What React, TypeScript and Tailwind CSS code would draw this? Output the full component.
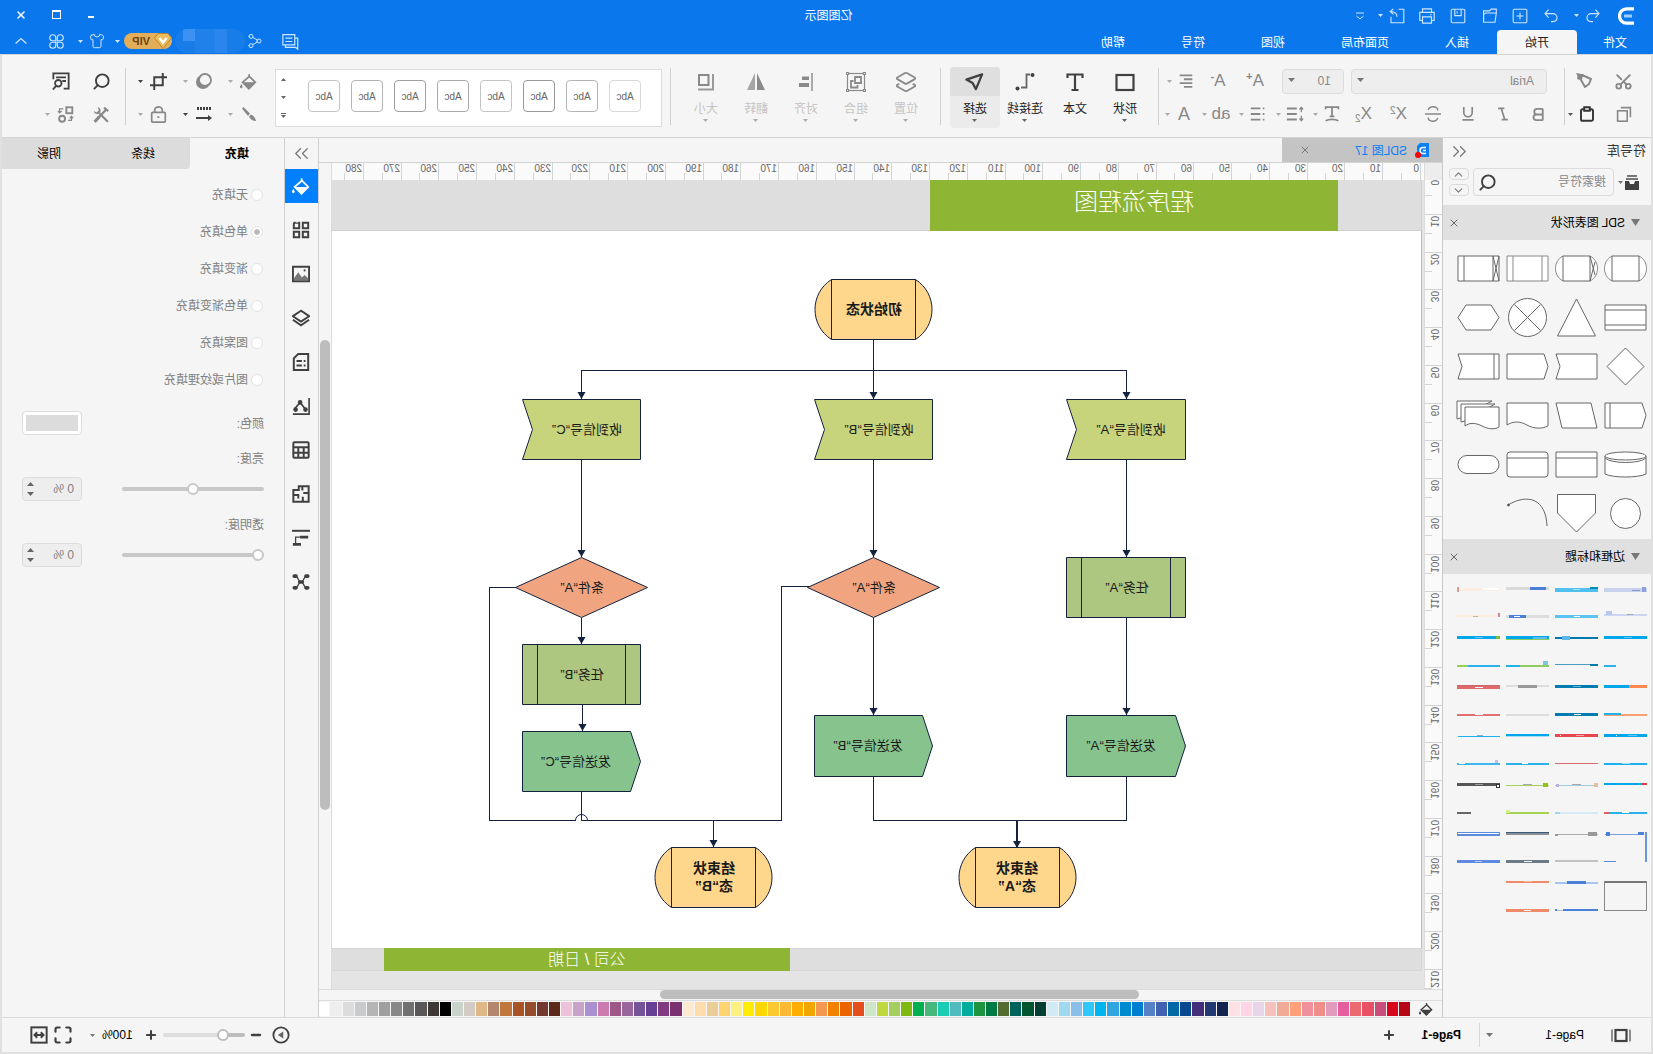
import React from 'react';
import {
  Bold,
  ChevronDown,
  ChevronUp,
  ChevronsLeft,
  ChevronsRight,
  Layers2,
  Maximize,
  Minus,
  Plus,
  Scissors,
  Search,
  Share2,
  Shirt,
  X,
} from 'lucide-react';

type Kids = { children?: React.ReactNode };

function Ic({ size = 20, sw = 2, children }: Kids & { size?: number; sw?: number }) {
  return (
    <svg width={size} height={size} viewBox="0 0 20 20" fill="none" stroke="currentColor" strokeWidth={sw} aria-hidden="true">
      {children}
    </svg>
  );
}

function Caret({ up = false, big = false }: { up?: boolean; big?: boolean }) {
  return (
    <svg width={big ? 7 : 5} height={big ? 4 : 3} viewBox="0 0 7 4" fill="currentColor" className="shrink-0" aria-hidden="true">
      <path d={up ? 'M0 4h7L3.5 0z' : 'M0 0h7L3.5 4z'} />
    </svg>
  );
}

function Btn({ label, className = '', children }: Kids & { label: string; className?: string }) {
  return (
    <button type="button" aria-label={label} className={`flex shrink-0 items-center justify-center ${className}`}>
      {children}
    </button>
  );
}

/* ---------- icons ---------- */

const Undo = () => (
  <Ic size={16} sw={1.4}>
    <path d="M7 2 2.500 7 7 12M3 7h9.500a5 5 0 0 1 5 5c0 3-2 5-5 5H10" />
  </Ic>
);
const Redo = () => (
  <Ic size={16} sw={1.4}>
    <path d="M13 2l4.500 5L13 12M17 7H7.500a5 5 0 0 0-5 5c0 3 2 5 5 5H10" />
  </Ic>
);
const Logo = () => (
  <svg width="17" height="18" viewBox="0 0 17 18" fill="none" stroke="#fff" aria-hidden="true">
    <path d="M1 1.800h7.500a7 7.200 0 0 1 0 14.400H1" strokeWidth="3.200" />
    <path d="M3 9h8" stroke="#9fd0ff" strokeWidth="3" />
  </svg>
);
const Printer = () => (
  <Ic size={18} sw={1.3}>
    <path d="M5 6V2h10v4M5 15H2V6h16v9h-3M5 11h10v7H5zM5 8.500h1.500" />
  </Ic>
);
const Folder = () => (
  <Ic size={17} sw={1.3}>
    <path d="M2 7V2.500h6l2 2h7V7M2 7h12.500l2.500 2v9H3.500z" />
    <path d="M17 4.500V16" />
  </Ic>
);
const Save = () => (
  <Ic size={16} sw={1.4}>
    <rect x="1.500" y="1.500" width="17" height="17" rx="1.500" />
    <path d="M6 1.500v8h8v-8M11 4v3" />
  </Ic>
);
const NewDoc = () => (
  <Ic size={16} sw={1.4}>
    <rect x="1.500" y="1.500" width="17" height="17" rx="1.500" />
    <path d="M10 5.500v9M5.500 10h9" />
  </Ic>
);
const Export = () => (
  <Ic size={16} sw={1.4}>
    <path d="M8 1.500H1.500v17h16V11M10 11c0-4 3-6.500 8-6.500M14.500 1l4 3.500-4 3.500" />
  </Ic>
);
const Chat = () => (
  <Ic size={17} sw={1.4}>
    <path d="M5 2h14v12H5zM5 6H1.500v13L4 17h12v-3M8 6h8M8 10h8" />
  </Ic>
);
const Clover = () => (
  <Ic size={15} sw={1.5}>
    <path d="M9 9H5a4 4 0 1 1 4-4zM11 9h4a4 4 0 1 0-4-4zM9 11H5a4 4 0 1 0 4 4zM11 11h4a4 4 0 1 1-4 4z" />
  </Ic>
);
const Painter = () => (
  <svg width="18" height="18" viewBox="0 0 18 18" aria-hidden="true">
    <path d="M2 7 11 3l1 5-4 7-4-3z" fill="none" stroke="currentColor" strokeWidth="2" strokeLinejoin="round" />
    <path d="M9 2.500 13 8l3-1-.5-3L17 1l-3 .5z" fill="currentColor" />
  </svg>
);
const CopyIc = () => (
  <Ic size={16}>
    <path d="M2 14V2h12" />
    <rect x="6" y="6" width="12" height="13" />
  </Ic>
);
const Paste = () => (
  <Ic size={16} sw={2.400}>
    <rect x="2.500" y="4" width="15" height="14.500" rx="2" />
    <path d="M6.500 1.500h7V6h-7z" fill="#f5f5f5" />
  </Ic>
);
const AlignIc = () => (
  <Ic size={14} sw={2.600}>
    <path d="M1 2h18M1 7.500h12M1 13h18M1 18.500h12" />
  </Ic>
);
const Spacing = () => (
  <Ic size={18} sw={2.2}>
    <path d="M8 4h11M8 10h11M8 16h11" />
    <path d="M3 3v5M3 12v5M1 5l2-2.500L5 5M1 15l2 2.500L5 15" strokeWidth="1.400" />
  </Ic>
);
const Bullets = () => (
  <Ic size={16} sw={2.4}>
    <path d="M7 3h12M7 10h12M7 17h12M2 3h2M2 10h2M2 17h2" />
  </Ic>
);
const Connector = () => (
  <svg width="20" height="20" viewBox="0 0 20 20" fill="none" strokeWidth="1.800" aria-hidden="true">
    <path d="M5 2.500h3.500v13H14" stroke="#666" />
    <circle cx="2.500" cy="3" r="2" fill="#404040" />
    <circle cx="17.500" cy="16.500" r="2" fill="#404040" />
  </svg>
);
const Pointer = () => (
  <Ic size={19} sw={2.400}>
    <path d="M2 2.500 18.500 8l-6.500 3.500L8.500 18z" strokeLinejoin="round" />
  </Ic>
);
const GroupIc = () => (
  <Ic size={20} sw={1.2}>
    <rect x="1.500" y="1.500" width="17" height="17" />
    <path d="M.5.5h2v2h-2zM17.500.5h2v2h-2zM.5 17.500h2v2h-2zM17.500 17.500h2v2h-2z" fill="#f5f5f5" />
    <path d="M5 5h6v6H5zM12.500 9H15v6.500H8.500V13" strokeWidth="1.800" />
  </Ic>
);
const AlignObj = () => (
  <svg width="16" height="18" viewBox="0 0 16 18" fill="currentColor" aria-hidden="true">
    <path d="M1 0h2v18H1z" opacity=".7" />
    <path d="M5 3.500h7v3.500H5zM5 10h10v4H5z" />
  </svg>
);
const FlipIc = () => (
  <svg width="20" height="18" viewBox="0 0 20 18" fill="currentColor" aria-hidden="true">
    <path d="M9 0v17H1z" />
    <path d="M11 0v17h8z" opacity=".75" />
  </svg>
);
const SizeIc = () => (
  <svg width="18" height="18" viewBox="0 0 18 18" fill="none" stroke="currentColor" strokeWidth="2" aria-hidden="true">
    <path d="M6.500 2H16v10H6.500z" />
    <path d="M2 1v15.500h15" opacity=".85" />
  </svg>
);
const ShadowIc = () => (
  <svg width="18" height="18" viewBox="0 0 18 18" aria-hidden="true">
    <circle cx="10" cy="10" r="7" fill="currentColor" />
    <circle cx="8" cy="8" r="6" fill="#f5f5f5" stroke="currentColor" strokeWidth="1.800" />
  </svg>
);
const CropIc = () => (
  <Ic size={17} sw={2.300}>
    <path d="M5 0v14.500h15M0 5h15v15" />
  </Ic>
);
const PenIc = () => (
  <svg width="16" height="16" viewBox="0 0 16 16" fill="currentColor" aria-hidden="true">
    <path d="M15.500 1.500 14 .5 6.500 7l2.500 2.500zM5.500 8 8 10.500C6.500 13.500 4 15.500 1 15.500c2-2 2-6 4.500-7.500z" />
  </svg>
);
const LinesIc = () => (
  <svg width="16" height="16" viewBox="0 0 16 16" fill="currentColor" aria-hidden="true">
    <path d="M1 1h2v3H1zM4 1h2v3H4zM7 1h2v3H7zM10 1h2v3h-2zM13 1h2v3h-2zM16 11H4V9l-4 3 4 3v-2h12z" />
  </svg>
);
const LockIc = () => (
  <Ic size={17} sw={2}>
    <rect x="2" y="7.500" width="16" height="11.500" rx="1" />
    <path d="M5.500 7.500V5a4 3.500 0 0 1 9 0v2.500M9 13h2.500" />
  </Ic>
);
const FindDoc = () => (
  <Ic size={18} sw={2}>
    <path d="M7 18.500H1.500v-17h17V8M4.500 6h11M4.500 10h4" />
    <circle cx="13" cy="12.500" r="3.600" />
    <path d="m15.500 15.500 3.500 4" />
  </Ic>
);
const ToolsIc = () => (
  <Ic size={17} sw={2.600}>
    <path d="M2 6l5-4M4.500 4 18 18.500M12.500 8.500 2.500 18.500" />
    <path d="M14.500 1.500a4 4 0 1 0 4.500 4.500L16 7.500 13 5z" fill="currentColor" stroke="none" />
    <path d="M12.500 12.500 18 18.500" strokeWidth="3.600" />
  </Ic>
);
const ReplaceIc = () => (
  <Ic size={17} sw={2.200}>
    <rect x="2" y="1.500" width="7" height="7" />
    <circle cx="14" cy="15" r="3.500" />
    <path d="M12.500 3.500h4.500v4M14.500 6l2.500 2 2-2M7 17H3v-4M1 14.500 3 12l2 2.500" strokeWidth="1.500" />
  </Ic>
);
const BucketIc = ({ size = 18 }: { size?: number }) => (
  <svg width={size} height={size} viewBox="0 0 20 20" aria-hidden="true">
    <path d="M9.500 1.500 9 4l8 7-7.500 7.500L2 11l7-7" fill="none" stroke="currentColor" strokeWidth="2" />
    <path d="M2 11h15l-7.500 7.500zM18.500 13c1.200 2 1.500 2.800 1.500 3.500a1.500 1.500 0 0 1-3 0c0-.7.3-1.500 1.500-3.500z" fill="currentColor" />
  </svg>
);

/* ---------- title bar ---------- */

function TitleBar() {
  const tabs = ['插入', '页面布局', '视图', '符号', '帮助'];
  return (
    <header className="shrink-0 bg-[#0a78ec] text-white">
      <div className="flex h-[29px] items-center pt-0.5">
        <div className="flex flex-1 items-center text-[#cfe5fc]">
          <div className="ml-[18px] w-[17px]"><Logo /></div>
          <Btn label="撤销" className="ml-[13px] w-6"><Undo /></Btn>
          <Btn label="撤销列表" className="w-2"><Caret /></Btn>
          <Btn label="恢复" className="ml-[6px] w-[31px]"><Redo /></Btn>
          <Btn label="新建" className="w-[31px]"><NewDoc /></Btn>
          <Btn label="打开" className="w-[31px]"><Folder /></Btn>
          <Btn label="保存" className="w-[31px]"><Save /></Btn>
          <Btn label="打印" className="w-[31px]"><Printer /></Btn>
          <Btn label="导出" className="ml-[3px] w-6"><Export /></Btn>
          <Btn label="导出列表" className="w-2"><Caret /></Btn>
          <Btn label="更多" className="ml-[9px] w-4">
            <Ic size={10} sw={2}><path d="M2 4h16M3 10l7 6 7-6" /></Ic>
          </Btn>
        </div>
        <h1 className="text-xs">亿图图示</h1>
        <div className="flex flex-1 justify-end pr-1 pb-0.5">
          <Btn label="最小化" className="w-[35px]"><span className="mt-1 h-0.5 w-1.5 bg-white" /></Btn>
          <Btn label="最大化" className="w-[35px]"><span className="size-[9px] border border-t-2 border-white" /></Btn>
          <Btn label="关闭" className="w-[35px]"><X size={12} strokeWidth={3} /></Btn>
        </div>
      </div>
      <div className="flex h-[25px] items-end text-xs">
        <nav className="flex flex-1 items-end">
          <button type="button" className="h-6 w-[76px] pt-0.5">文件</button>
          <button type="button" className="h-6 w-20 rounded-t-sm bg-[#f5f5f5] pt-0.5 text-[#222]">开始</button>
          {tabs.map((t) => (
            <button type="button" key={t} className="h-6 px-7 pt-0.5">{t}</button>
          ))}
        </nav>
        <div className="flex h-[26px] items-center pr-[9px] text-[#cfe5fc]">
          <Btn label="消息" className="w-9"><Chat /></Btn>
          <Btn label="分享" className="ml-2 w-5"><Share2 size={16} strokeWidth={1.5} /></Btn>
          <div className="flex h-6 w-[70px] overflow-hidden rounded-full bg-[#187de9]">
            <span className="w-[18px]" />
            <span className="w-3 bg-[#2a86ec]" />
            <span className="w-5 bg-[#2081ea]" />
            <span className="h-3 w-3 bg-[#3b92f2]" />
          </div>
          <div className="ml-[3px] flex h-4 w-12 items-center rounded-full bg-[#e3ae5a] text-[#6b4512]">
            <svg width="18" height="16" viewBox="0 0 18 16" aria-hidden="true">
              <path d="M4 .5h10l3.500 4.500L9 15.500.5 5z" fill="#eebb5c" stroke="#b98430" />
              <path d="m5.500 5 3.500 4.500L12.500 5" fill="none" stroke="#fff" strokeWidth="2.400" />
            </svg>
            <span className="ml-1 text-[11px] font-bold">VIP</span>
          </div>
          <Btn label="账户" className="ml-0.5 w-2"><Caret /></Btn>
          <Btn label="主题" className="ml-[5px] w-6"><Shirt size={16} strokeWidth={1.5} /></Btn>
          <Btn label="主题列表" className="w-2"><Caret /></Btn>
          <Btn label="应用" className="ml-2 w-6"><Clover /></Btn>
          <Btn label="收起功能区" className="ml-3 w-6"><Ic size={12} sw={2.200}><path d="m1 14 9-8 9 8" /></Ic></Btn>
        </div>
      </div>
    </header>
  );
}

/* ---------- ribbon ---------- */

function Divider() {
  return <div className="h-[57px] w-px shrink-0 bg-[#d0d0d0]" />;
}

function Split({ label, wide = false, dark = false, children }: Kids & { label: string; wide?: boolean; dark?: boolean }) {
  return (
    <div className={`flex shrink-0 items-center ${wide ? 'w-[45px]' : 'w-[37px] pl-0.5'} ${dark ? 'text-[#404040]' : ''}`}>
      <Btn label={label} className={wide ? 'w-7' : 'w-6'}>{children}</Btn>
      <Btn label={`${label}选项`} className={`w-2 ${dark ? '' : 'text-[#aaa]'}`}><Caret /></Btn>
    </div>
  );
}

function Big({ label, tone = 'dark', caret = true, children }: Kids & { label: string; tone?: 'dark' | 'dim' | 'active'; caret?: boolean }) {
  const color = tone === 'dim' ? 'text-[#c4c4c4]' : 'text-[#222]';
  const icon = tone === 'dim' ? 'text-[#8a8a8a]' : 'text-[#404040]';
  return (
    <button type="button" className={`flex w-[50px] shrink-0 flex-col items-center rounded-sm text-xs ${color} ${tone === 'active' ? 'bg-[#ebebeb]' : ''}`}>
      <span className={`flex h-[29px] w-full items-center justify-center ${icon} ${tone === 'active' ? 'rounded-t-sm bg-[#dfdfdf]' : ''}`}>{children}</span>
      <span className="mt-1 h-[18px] leading-[18px]">{label}</span>
      <span className={`flex h-[10px] pt-px ${tone === 'dim' ? 'text-[#aaa]' : 'text-[#666]'}`}>{caret && <Caret />}</span>
    </button>
  );
}

function Ribbon() {
  const cards = ['border-[#d8d8d8]', 'border-[#b5b5b5]', 'border-[#999]', 'border-[#c4c4c4]', 'border-[#aaa]', 'border-[#a0a0a0]', 'border-[#b5b5b5]', 'border-[#c4c4c4]'];
  return (
    <section className="flex h-[84px] shrink-0 items-start border-y border-[#d4d4d4] pt-[13px] text-[#888]">
      <div className="flex w-[86px] shrink-0 flex-col gap-[7px] pl-[9px]">
        <div className="flex h-[26px]">
          <Btn label="剪切" className="w-9"><Scissors size={19} strokeWidth={2.4} className="-rotate-90" /></Btn>
          <Btn label="格式刷" className="ml-1 w-9"><Painter /></Btn>
        </div>
        <div className="flex h-[26px]">
          <Btn label="复制" className="w-9"><CopyIc /></Btn>
          <Btn label="粘贴" className="ml-[7px] w-6 text-[#333]"><Paste /></Btn>
          <Btn label="粘贴选项" className="w-2 text-[#555]"><Caret /></Btn>
        </div>
      </div>
      <Divider />
      <div className="flex w-[405px] shrink-0 flex-col gap-[7px]">
        <div className="flex h-[26px] items-center pl-[17px]">
          <div className="relative w-[196px]">
            <select aria-label="字体" className="h-[25px] w-full appearance-none rounded-sm border border-[#dcdcdc] bg-[#eee] pl-3 text-xs">
              <option>Arial</option>
            </select>
            <span className="pointer-events-none absolute top-[10px] right-[6px] text-[#777]"><Caret big /></span>
          </div>
          <div className="relative ml-[7px] w-[62px]">
            <select aria-label="字号" className="h-[25px] w-full appearance-none rounded-sm border border-[#dcdcdc] bg-[#eee] pl-3 text-xs">
              <option>10</option>
            </select>
            <span className="pointer-events-none absolute top-[10px] right-[6px] text-[#777]"><Caret big /></span>
          </div>
          <Btn label="增大字号" className="ml-[9px] w-9 text-[17px] font-medium">A<sup className="text-[11px] font-bold">+</sup></Btn>
          <Btn label="减小字号" className="ml-px w-9 text-[17px] font-medium">A<sup className="text-[11px] font-bold">-</sup></Btn>
          <Split label="对齐方式"><AlignIc /></Split>
        </div>
        <div className="flex h-[26px] items-center pl-2">
          <Btn label="加粗" className="w-[35px]"><Bold size={17} strokeWidth={2.6} /></Btn>
          <Btn label="斜体" className="w-[35px]"><Ic size={14} sw={2.400}><path d="M8 2h9M3 18h9M12.500 2 7.500 18" /></Ic></Btn>
          <Btn label="下划线" className="w-[35px]"><Ic size={14} sw={2.400}><path d="M4 0v8a6 6 0 0 0 12 0V0M2 18.500h16" /></Ic></Btn>
          <Btn label="删除线" className="w-[35px]"><Ic size={16} sw={1.8}><path d="M16 5c-1-3-3-4-6-4-4 0-6 2-6 4.500M4 15c1 3 3 4 6 4 4 0 6-2 6-4.500M0 10h20" /></Ic></Btn>
          <Btn label="上标" className="w-[35px]"><span className="text-[17px]">X</span><span className="mb-2 text-[10px]">2</span></Btn>
          <Btn label="下标" className="w-[35px]"><span className="text-[17px]">X</span><span className="mt-2 text-[10px]">2</span></Btn>
          <Split label="文字样式"><Ic size={16} sw={2.200}><path d="M2 4V1.500h16V4M10 1v12M7 13h6M2 18.500c4-2.500 12-2.500 16 0" /></Ic></Split>
          <Split label="行距"><Spacing /></Split>
          <Split label="项目符号"><Bullets /></Split>
          <Split label="高亮"><span className="text-[17px]">ab</span></Split>
          <Split label="字体颜色"><span className="text-[18px] font-medium">A</span></Split>
        </div>
      </div>
      <Divider />
      <div className="-mt-px ml-2 flex w-[209px] shrink-0">
        <Big label="形状"><Ic size={20} sw={2.200}><rect x="1.500" y="3" width="17" height="15" /></Ic></Big>
        <Big label="文本" caret={false}><Ic size={20} sw={2.200}><path d="M2.500 6V2.500h15V6M10 2v16M6.500 18h7" /></Ic></Big>
        <Big label="连接线"><Connector /></Big>
        <Big label="选择" tone="active"><Pointer /></Big>
      </div>
      <Divider />
      <div className="-mt-px ml-[9px] flex w-[260px] shrink-0">
        <Big label="位置" tone="dim"><Layers2 size={22} /></Big>
        <Big label="组合" tone="dim"><GroupIc /></Big>
        <Big label="对齐" tone="dim"><AlignObj /></Big>
        <Big label="翻转" tone="dim"><FlipIc /></Big>
        <Big label="大小" tone="dim"><SizeIc /></Big>
      </div>
      <Divider />
      <div className="mt-px ml-2 flex h-[58px] min-w-0 flex-1 justify-between overflow-hidden border border-[#dcdcdc] bg-white">
        <div className="flex gap-[11px] overflow-hidden pt-[10px] pl-5">
          {cards.map((c, i) => (
            <button type="button" key={i} className={`h-8 w-8 shrink-0 rounded border text-[10px] text-[#666] ${c}`}>Abc</button>
          ))}
        </div>
        <div className="flex w-[15px] flex-col items-center justify-between py-2 text-[#666]">
          <Btn label="上一行"><Caret up /></Btn>
          <Btn label="下一行"><Caret /></Btn>
          <Btn label="展开样式" className="flex-col gap-px"><span className="h-px w-[5px] bg-[#666]" /><Caret /></Btn>
        </div>
      </div>
      <div className="flex w-[149px] shrink-0 flex-col gap-[7px] pl-3">
        <div className="flex h-[26px]">
          <Split wide label="填充"><BucketIc size={17} /></Split>
          <Split wide label="阴影"><ShadowIc /></Split>
          <Split wide dark label="裁剪"><CropIc /></Split>
        </div>
        <div className="flex h-[26px]">
          <Split wide label="线条"><span className="-scale-x-100"><svg width="16" height="16" viewBox="0 0 16 16" fill="currentColor" aria-hidden="true"><path d="M1 2.500 2.500 1 9 7.500 7 10zM10 8.500c2.500 1 4.500 3.500 5 6.500-3 0-5.500-1.500-7-4.500z" /></svg></span></Split>
          <Split wide dark label="线型"><LinesIc /></Split>
          <Split wide label="锁定"><LockIc /></Split>
        </div>
      </div>
      <Divider />
      <div className="flex w-[123px] shrink-0 flex-col gap-[7px] pl-[5px]">
        <div className="flex h-[26px] text-[#404040]">
          <Btn label="查找" className="w-9"><Search size={19} strokeWidth={2.4} /></Btn>
          <Btn label="查找替换" className="ml-[5px] w-9"><FindDoc /></Btn>
        </div>
        <div className="flex h-[26px]">
          <Btn label="工具" className="w-9"><ToolsIc /></Btn>
          <Btn label="替换" className="ml-1 w-7"><ReplaceIc /></Btn>
          <Btn label="替换选项" className="w-2 text-[#aaa]"><Caret /></Btn>
        </div>
      </div>
    </section>
  );
}

/* ---------- symbol library ---------- */

const symbols: React.ReactNode[] = [
  <><path d="M11 12C1 17 1 32 11 37M38 12c10 5 10 20 0 25" stroke="#888" /><path d="M11 12h27v25H11z" /></>,
  <><path d="M11 12C1 17 1 32 11 37M38 12c10 5 10 20 0 25" stroke="#888" /><path d="M11 12h27v25H11zM6 18l5 19M6 31l5-19" /></>,
  <><path d="M4 12h41v25H4z" stroke="#888" /><path d="M10 12v25M39 12v25" stroke="#888" /></>,
  <><path d="M4 12h41v25H4zM10 12v25M39 12v25M4 12l6 25M10 12 4 37" /></>,
  <><path d="M4 12h41v25H4zM4 17h41M4 32h41" /></>,
  <><path d="M24.500 6 43.500 43h-38z" /></>,
  <><circle cx="24.500" cy="24.500" r="19" /><path d="m11.500 11.500 26 26M37.500 11.500l-26 26" /></>,
  <><path d="M12 12h25l8 12.500L37 37H12L4 24.500z" /></>,
  <><path d="M24.500 6 43 24.500 24.500 43 6 24.500z" /></>,
  <><path d="M4 12h41l-4 12.500L45 37H4z" /></>,
  <><path d="M8 12h37v25H8L4 24.500z" /></>,
  <><path d="M4 12h41l-4 12.500L45 37H4zM9 12v25" /></>,
  <><path d="M8 12h37v25H8L4 24.500zM40 12v25" /></>,
  <><path d="M10 12h35l-6 25H4z" /></>,
  <><path d="M4 12h41v22c-6-4-13-4-20 0s-15 4-21 1z" /></>,
  <><path d="M11 10h35v18l-4-1z" /><path d="M8 13h34v18l-4-1z" /><path d="M4 16h34v19c-5-4-11-3-17 0s-12 4-17 1z" /></>,
  <><path d="M4 16v18c8 4 33 4 41 0V16" /><path d="M4 18c6 6 35 6 41 0" /><ellipse cx="24.500" cy="16" rx="20.500" ry="4" /></>,
  <><path d="M4 12h41v25H4zM4 18h41" /></>,
  <><rect x="4" y="12" width="41" height="25" rx="3" /><path d="M4 18h41" /></>,
  <><rect x="4" y="15.500" width="41" height="18" rx="9" /></>,
  <><circle cx="24.500" cy="24.500" r="15" /></>,
  <><path d="M5.500 5.500h38V24L24.500 43 5.500 24z" /></>,
  <><path d="M5 37C6 10 24 4 44 16" fill="none" /><circle cx="43.500" cy="16" r="1" fill="#333" /></>,
];

type Bar = [number, number, number, number, string];
const frames: Bar[][] = [
  [[3, 10, 43, 4, '#c8d1ee'], [4, 9, 4, 5, '#8fa2dc'], [10, 12, 8, 1, '#8a96bd'], [3, 36, 43, 2, '#ccd6f3'], [38, 33, 6, 4, '#b9c6ee'], [17, 36, 6, 1, '#9aa']],
  [[3, 10, 43, 4, '#4fc0f0'], [3, 9, 8, 2, '#0089b5'], [21, 11, 7, 1, '#a8e0f8'], [3, 37, 43, 3, '#5bc4f0'], [21, 38, 6, 1, '#fff']],
  [[3, 9, 43, 3, '#d9d9d9'], [6, 9, 16, 3, '#4a80d8'], [3, 37, 43, 3, '#dddddd'], [26, 37, 17, 3, '#4a80d8'], [32, 38, 6, 1, '#fff']],
  [[3, 10, 43, 3, '#fdeee3'], [44, 9, 2, 5, '#dd9999'], [4, 10, 16, 2, '#ffffff'], [3, 37, 43, 2, '#fdeee0'], [3, 35, 2, 4, '#cc8899'], [25, 38, 5, 1, '#bbbbaa']],
  [[3, 9, 43, 3, '#00a6ea'], [18, 10, 8, 1, '#5fc6f2'], [34, 38, 12, 2, '#2ab0ea']],
  [[3, 10, 43, 2, '#0079ad'], [31, 9, 8, 4, '#5cb7ec'], [3, 37, 43, 1, '#4a9cc4'], [3, 37, 8, 2, '#0079ad']],
  [[3, 9, 43, 3, '#00a6ea'], [3, 12, 43, 1, '#8ccf60'], [5, 10, 14, 2, '#5bbcf0'], [3, 38, 29, 2, '#92cc60'], [32, 38, 14, 2, '#1fb0ee'], [4, 34, 5, 4, '#7cc5e6']],
  [[3, 9, 43, 3, '#00a6ea'], [3, 9, 4, 3, '#7fbf3f'], [20, 10, 8, 1, '#5fc6f2'], [3, 38, 43, 2, '#2ab0ea'], [35, 38, 11, 2, '#95d050']],
  [[3, 9, 43, 3, '#00a6ea'], [3, 9, 18, 3, '#fd8850'], [3, 38, 43, 2, '#fba070'], [29, 37, 17, 2, '#1fb0ee']],
  [[3, 9, 43, 3, '#007cb0'], [20, 10, 8, 1, '#59b4d8'], [3, 37, 43, 3, '#007cb0'], [20, 38, 7, 1, '#fff']],
  [[3, 9, 43, 2, '#dddddd'], [15, 9, 19, 3, '#999999'], [3, 38, 43, 2, '#dddddd']],
  [[3, 9, 43, 1, '#c96a70'], [3, 10, 43, 3, '#e06a6a'], [20, 11, 8, 1, '#fff'], [3, 38, 43, 2, '#e37070'], [20, 38, 8, 1, '#fff']],
  [[3, 9, 43, 3, '#00a6ea'], [13, 10, 9, 1, '#5fc6f2'], [33, 10, 1, 1, '#fff'], [3, 38, 43, 2, '#1fb0ee'], [20, 38, 8, 1, '#9bdcf7']],
  [[3, 9, 43, 3, '#e5484a'], [17, 10, 8, 1, '#f4a0a0'], [40, 10, 1, 1, '#fff'], [3, 38, 43, 1, '#d86a70']],
  [[3, 9, 43, 2, '#00a6ea'], [3, 11, 43, 1, '#a8dff8'], [3, 38, 43, 2, '#2ab0ea'], [24, 38, 6, 1, '#fff']],
  [[3, 11, 42, 1, '#1fb0ee'], [20, 10, 6, 1, '#9ab'], [3, 38, 43, 2, '#3cb8ee'], [5, 35, 3, 3, '#ccbbdd'], [38, 38, 6, 1, '#fff']],
  [[3, 9, 43, 2, '#00a6ea'], [3, 9, 5, 2, '#d94040'], [3, 38, 43, 2, '#2ab0ea'], [41, 38, 5, 2, '#d96060'], [21, 38, 7, 1, '#fff']],
  [[3, 11, 43, 1, '#9fcbe0'], [3, 9, 4, 4, '#e0c0a0'], [42, 10, 3, 3, '#bbb0e0'], [20, 10, 9, 1, '#aaa'], [3, 38, 43, 2, '#d5eaf5'], [41, 38, 5, 2, '#a5d5ee']],
  [[3, 11, 43, 1, '#a5cf5a'], [4, 9, 5, 4, '#8fc31f'], [20, 10, 9, 1, '#aaa'], [3, 38, 43, 2, '#a5d550'], [42, 36, 4, 3, '#d5ef90']],
  [[3, 9, 43, 3, '#555555'], [3, 10, 4, 4, '#333333'], [4, 11, 2, 2, '#fff'], [20, 10, 8, 1, '#999'], [32, 38, 14, 2, '#666666']],
  [[3, 9, 2, 30, '#6a94d8'], [7, 11, 38, 1, '#7aa0e0'], [6, 9, 6, 3, '#4a80d8'], [40, 9, 4, 4, '#4a80d8'], [34, 38, 12, 1, '#5a8ad8']],
  [[3, 11, 43, 1, '#aaaaaa'], [4, 9, 9, 4, '#999999'], [43, 11, 3, 2, '#999999'], [3, 37, 43, 2, '#c2c2c2']],
  [[3, 9, 43, 3, '#8a8f96'], [3, 9, 43, 1, '#3a5a7a'], [3, 37, 43, 3, '#6c7a88'], [20, 38, 8, 1, '#fff']],
  [[3, 9, 43, 4, '#5c8ade'], [4, 10, 41, 1, '#ffffff'], [3, 37, 43, 3, '#5c8ade'], [21, 38, 7, 1, '#b5cbf5']],
  [[3, 9, 43, 2, '#777777'], [3, 9, 1, 30, '#888888'], [45, 9, 1, 30, '#888888'], [3, 38, 43, 1, '#888888']],
  [[3, 10, 43, 2, '#a8c4f0'], [15, 9, 19, 3, '#4a80d8'], [3, 37, 35, 2, '#4a80d8'], [38, 38, 6, 1, '#bbb'], [44, 37, 2, 2, '#4a80d8']],
  [[3, 9, 43, 2, '#f08a68'], [20, 9, 8, 1, '#f8b8a0'], [3, 37, 43, 3, '#f08a68'], [21, 38, 7, 1, '#fff']],
];

function SectionHead({ title }: { title: string }) {
  return (
    <div className="flex h-[35px] shrink-0 items-center bg-[#e0e0e0] pl-[11px] text-xs text-black">
      <svg width="9" height="7" viewBox="0 0 9 7" fill="#777" aria-hidden="true"><path d="M0 0h9L4.500 7z" /></svg>
      <span className="ml-[6px] flex-1">{title}</span>
      <Btn label={`关闭${title}`} className="mr-[3px] w-4 text-[#666]"><X size={12} strokeWidth={2} /></Btn>
    </div>
  );
}

function Library() {
  return (
    <aside className="flex w-[209px] shrink-0 flex-col border-r border-[#c8c8c8]">
      <div className="flex h-[26px] items-center justify-between pr-[5px] pl-[5px] text-[13px] text-[#333]">
        符号库
        <Btn label="收起符号库" className="text-[#777]"><ChevronsLeft size={23} strokeWidth={1.3} /></Btn>
      </div>
      <div className="mt-1 flex h-7 items-center">
        <Btn label="库列表" className="ml-3 w-[14px] text-[#404040]">
          <svg width="14" height="15" viewBox="0 0 14 15" fill="currentColor" aria-hidden="true">
            <path d="M2 0h10v2H2zM1 3h12v2H1z" opacity=".7" />
            <path d="M0 6h4l1 3h4l1-3h4v9H0z" />
          </svg>
        </Btn>
        <Btn label="库选项" className="w-2 text-[#777]"><Caret /></Btn>
        <label className="ml-[3px] flex h-7 w-[141px] items-center justify-between rounded-sm border border-[#dcdcdc] pr-1 pl-[7px]">
          <input aria-label="搜索符号" placeholder="搜索符号" className="w-[90px] bg-transparent text-xs outline-none placeholder:text-[#888]" />
          <Search size={19} strokeWidth={2.4} className="text-[#404040]" />
        </label>
        <div className="ml-1 flex w-5 flex-col gap-1 text-[#777]">
          <Btn label="上一个" className="h-3 rounded-sm border border-[#dcdcdc]"><ChevronUp size={13} strokeWidth={2} /></Btn>
          <Btn label="下一个" className="h-3 rounded-sm border border-[#dcdcdc]"><ChevronDown size={13} strokeWidth={2} /></Btn>
        </div>
      </div>
      <div className="h-[9px] shrink-0" />
      <SectionHead title="SDL 图表形状" />
      <div className="grid h-[299px] shrink-0 grid-cols-[repeat(4,49px)] content-start pt-1 pl-px">
        {symbols.map((s, i) => (
          <svg key={i} width="49" height="49" viewBox="0 0 49 49" fill="#fff" stroke="#666" strokeWidth="1">{s}</svg>
        ))}
      </div>
      <SectionHead title="边框和标题" />
      <div className="grid grid-cols-[repeat(4,49px)] content-start pt-1 pl-px">
        {frames.map((bars, i) => (
          <svg key={i} width="49" height="49" viewBox="0 0 49 49" shapeRendering="crispEdges">
            {bars.map(([x, y, w, h, c], j) => (
              <rect key={j} x={x} y={y} width={w} height={h} fill={c} />
            ))}
          </svg>
        ))}
      </div>
    </aside>
  );
}

/* ---------- canvas ---------- */

const UNIT = 37.75;

function TopRuler() {
  const marks = Array.from({ length: 30 }, (_, i) => i);
  return (
    <svg className="block h-[17px] w-full bg-[#fafafa]" shapeRendering="crispEdges">
      {marks.map((i) => {
        const x = Math.round(3 + i * UNIT);
        return (
          <g key={i}>
            <path d={`M${x}.5 0v18M${x + 19}.5 10v8`} stroke="#d4d4d4" />
            <text x={x + 2} y="9" fontSize="10" fill="#666">{i < 29 ? i * 10 : ''}</text>
          </g>
        );
      })}
    </svg>
  );
}

function SideRuler() {
  const marks = Array.from({ length: 22 }, (_, i) => i);
  return (
    <svg className="block h-full w-[17px] bg-[#fafafa]" shapeRendering="crispEdges">
      {marks.map((i) => {
        const y = Math.round(i * UNIT) - 4;
        return (
          <g key={i}>
            <path d={`M0 ${y}.5h17M10 ${y + 19}.5h7`} stroke="#d4d4d4" />
            <text transform={`translate(11 ${i ? y + 2 : 0}) rotate(-90)`} textAnchor="end" fontSize="10" fill="#666">{i * 10}</text>
          </g>
        );
      })}
    </svg>
  );
}

function Label({ x, y, bold, children }: { x: number; y: number; bold?: boolean; children: string }) {
  return (
    <text x={x} y={y + 5} textAnchor="middle" fontSize={bold ? 14 : 13} fontWeight={bold ? 700 : 400} fill="#1a1a1a" stroke="none">
      {children}
    </text>
  );
}

const Terminal = ({ x, y }: { x: number; y: number }) => (
  <g fill="#ffd78c">
    <path d={`M${x + 17} ${y}C${x - 5} ${y + 14} ${x - 5} ${y + 46} ${x + 17} ${y + 60}H${x + 101}C${x + 123} ${y + 46} ${x + 123} ${y + 14} ${x + 101} ${y}z`} />
    <path d={`M${x + 17} ${y}v60M${x + 101} ${y}v60`} />
  </g>
);
const Receive = ({ x, y, w = 118 }: { x: number; y: number; w?: number }) => <path fill="#c8d47c" d={`M${x} ${y}h${w}l-10 30 10 30H${x}z`} />;
const SendBox = ({ x, y, w = 118, h = 60 }: { x: number; y: number; w?: number; h?: number }) => (
  <path fill="#87c48d" d={`M${x + 10} ${y}H${x + w}v${h}H${x + 10}l-10-${h / 2}z`} />
);
const Task = ({ x, y, w = 118 }: { x: number; y: number; w?: number }) => (
  <path fill="#adc680" d={`M${x} ${y}h${w}v60H${x}zM${x + 15} ${y}v60M${x + w - 15} ${y}v60`} />
);
const Decision = ({ x, y }: { x: number; y: number }) => <path fill="#f0a580" d={`M${x} ${y - 30}l66 30-66 30-66-30z`} />;
const Arrow = ({ x, y }: { x: number; y: number }) => <path fill="#14213f" stroke="none" d={`M${x - 4} ${y - 6}h8l-4 7z`} />;

function Diagram() {
  return (
    <svg width="1089" height="717" viewBox="232 231 1089 717" fill="none" stroke="#14213f" strokeWidth="1" className="block">
      <g shapeRendering="crispEdges">
        <path d="M779.500 340V399M526.500 399V370.500H1071.500V399M526.500 460V557M779.500 460V557M1071.500 460V557" />
        <path d="M526.500 618V715M779.500 618V715M1071.500 618V644M1070.500 705V731M844.500 586.500H871.500V820.500M1137.500 587.500H1163.500V820.500H1077.500M1071.500 791V820.500H871.500M939.500 820V847" />
        <path d="M526.500 776V820.500H779.500V776" />
        <path d="M636 820V847" strokeWidth="2" />
      </g>
      <path d="M1065.500 820.500a6 6 0 0 1 12 0" />
      <Arrow x={779.5} y={398} /><Arrow x={526.5} y={398} /><Arrow x={1071.5} y={398} />
      <Arrow x={526.5} y={556} /><Arrow x={779.5} y={556} /><Arrow x={1071.5} y={556} />
      <Arrow x={526.5} y={714} /><Arrow x={779.5} y={714} /><Arrow x={1071.5} y={643} /><Arrow x={1070.5} y={730} />
      <Arrow x={939.5} y={846} /><Arrow x={636} y={847} />
      <Terminal x={720.5} y={279.5} />
      <Label x={779} y={309} bold>初始状态</Label>
      <Receive x={467.5} y={399.5} w={119} /><Receive x={720.5} y={399.5} /><Receive x={1012.5} y={399.5} />
      <Label x={522} y={429}>收到信号“A”</Label>
      <Label x={774} y={429}>收到信号“B”</Label>
      <Label x={1066} y={429}>收到信号“C”</Label>
      <Task x={467.5} y={557.5} w={119} />
      <Label x={526} y={587}>任务“A”</Label>
      <Decision x={779.5} y={587.5} /><Decision x={1071.5} y={587.5} />
      <Label x={779} y={587}>条件“A”</Label>
      <Label x={1071} y={587}>条件“A”</Label>
      <Task x={1012.5} y={644.5} />
      <Label x={1071} y={674}>任务“B”</Label>
      <SendBox x={467.5} y={715.5} w={119} h={61} /><SendBox x={720.5} y={715.5} h={61} /><SendBox x={1012.5} y={731.5} />
      <Label x={532} y={745}>发送信号“A”</Label>
      <Label x={785} y={745}>发送信号“B”</Label>
      <Label x={1077} y={761}>发送信号“C”</Label>
      <Terminal x={576.5} y={847.5} /><Terminal x={880.5} y={847.5} />
      <Label x={636} y={868} bold>结束状</Label>
      <Label x={636} y={886} bold>态“A”</Label>
      <Label x={939} y={868} bold>结束状</Label>
      <Label x={939} y={886} bold>态“B”</Label>
    </svg>
  );
}

const palette =
  'b50714 d9071c c94f7a e85164 ea6a70 e55f9f e39bbb ee8e88 f0909c ffa07a f0ab96 f6c0bc e9d5ea ffd5e5 ffe0e4 12234f 223870 422e7a 08488f 0269a6 4062b0 5582c6 007fd0 008bd0 2fa6e1 00b4f0 30c8fa 8abfe9 a0d8ef cfebf5 003f32 00552e 00635c 556b2f 007b43 1e943f 00ac9b 50bcc0 1accb1 47b87c 00af50 7fb80e a4cf60 c0d840 cde6c7 e44e1f eb6400 f18200 f39850 f2a600 ffae00 fdb933 fbc92f ffd700 ffec00 fbf17e fed470 eacd97 fedcac fde8d0 7b3070 813a80 674095 745398 98659c 9e5888 cc7bb0 a991d0 c7a3c9 ecc2db 5c281b 733930 944c2a a95226 c0763c b3866d deb887 d5cbc5 c9d3cb 000000 3e3937 595757 727171 888888 9e9f9f b5b5b5 c9cacb dcdcdc eeeeee ffffff'.split(' ');

function Workspace() {
  return (
    <main className="flex min-w-0 flex-1 flex-col">
      <div className="flex h-6 shrink-0">
        <div className="flex w-40 items-center bg-[#c4c4c4] pl-[13px] text-xs text-[#0a80f5]">
          <svg width="14" height="16" viewBox="0 0 14 16" aria-hidden="true">
            <path d="M0 1h9l3 3v11H0z" fill="#0a80f5" />
            <path d="M3 5.500h3a3 3 0 0 1 0 6H3M3 8.500h3" fill="none" stroke="#fff" strokeWidth="1.500" />
            <circle cx="11" cy="13" r="3" fill="red" />
          </svg>
          <span className="ml-2 flex-1 pt-px">SDL图 17</span>
          <Btn label="关闭文档" className="mr-[15px] w-4 text-[#777]"><X size={12} strokeWidth={2} /></Btn>
        </div>
      </div>
      <div className="flex h-[18px] shrink-0 border-t border-[#d4d4d4]">
        <div className="w-[18px] shrink-0 border-r border-[#dcdcdc] bg-[#ededed]" />
        <div className="min-w-0 flex-1 overflow-hidden"><TopRuler /></div>
        <div className="w-[13px] shrink-0 border-l border-[#dcdcdc]" />
      </div>
      <div className="flex min-h-0 flex-1">
        <div className="w-[18px] shrink-0 overflow-hidden border-r border-[#dcdcdc]"><SideRuler /></div>
        <div className="flex min-w-0 flex-1 flex-col overflow-hidden bg-[#e4e4e4] pb-[18px] pl-[2px]">
          <div className="flex h-[51px] shrink-0 border-b border-l border-[#d0d0d0] bg-[#dedede] pl-[83px]">
            <div className="h-[51px] w-[408px] bg-[#8eb533] pt-[6px] text-center text-2xl font-light text-white">程序流程图</div>
          </div>
          <div className="min-h-0 flex-1 overflow-hidden border-l border-[#b8b8b8] bg-white"><Diagram /></div>
          <div className="flex h-[23px] shrink-0 justify-end border-y border-l border-[#d6d6d6] bg-[#dedede] pr-[52px]">
            <div className="-mt-px h-[23px] w-[406px] bg-[#8eb533] text-center text-base leading-6 font-light text-white">公司 / 日期</div>
          </div>
        </div>
        <div className="w-[13px] shrink-0 border-l border-[#dcdcdc] pt-[160px] pl-px">
          <div className="h-[470px] w-[10px] rounded-full bg-[#bdbdbd]" />
        </div>
      </div>
      <div className="h-3 shrink-0 border-y border-[#dcdcdc] pl-[303px]">
        <div className="h-[9px] w-[479px] rounded-full bg-[#bdbdbd]" />
      </div>
      <div className="flex h-4 shrink-0 items-center overflow-hidden">
        <Btn label="填充颜色" className="w-8 text-[#404040]"><BucketIc size={14} /></Btn>
        <div className="flex flex-1 gap-px">
          {palette.map((c, i) => (
            <button type="button" key={i} aria-label={`#${c}`} className="h-[14px] flex-1" style={{ backgroundColor: `#${c}` }} />
          ))}
        </div>
      </div>
    </main>
  );
}

/* ---------- format panel ---------- */

function Strip() {
  const icons: [string, React.ReactNode][] = [
    ['符号', <><path d="M2 2h6v6H2zM12 2h6v6h-6zM2 12h6v6H2zM12 12h6v6h-6z" /><path d="M13 1h3M18 1h2v3" stroke="#f5f5f5" strokeWidth="1.500" /></>],
    ['图片', <><path d="M1 2h18v16H1z" /><path d="M2 17v-2l4-4 3 3 4-6 5 7v2z" fill="#777" stroke="none" /><path d="M5 6h2" /></>],
    ['图层', <><path d="m10 2 9 6-9 6-9-6zM1 12l9 6 9-6" /></>],
    ['文档', <><path d="M2 1h11l5 5v13H2z" /><path d="M5 9h2M9 9h6M5 14h2M9 14h6" /></>],
    ['图表', <><path d="M1 1v18h18M4 15l7-9 6 7" strokeWidth="1.800" /><circle cx="11" cy="6" r="1.500" fill="#404040" /><circle cx="5" cy="14" r="1.500" fill="#404040" /><circle cx="16" cy="14" r="1.500" fill="#404040" /></>],
    ['表格', <><rect x="1.500" y="1.500" width="17" height="17" rx="1" /><path d="M2 7h17M2 13h17M7 7v12M13 7v12" /></>],
    ['平面图', <><path d="M1.500 1.500h11v4h6v13h-17zM1.500 9h6M8.500 1.500V6M18 11h-5v4M8 18v-5" /></>],
    ['时间线', <><path d="M0 2h20" /><path d="M2 9h9M10 17h9" strokeWidth="3" /><path d="M11 9h5v8" strokeWidth="1.400" /></>],
    ['思维导图', <><path d="M3 3.500c5 0 3 6.500 7 6.500s2-6.500 7-6.500M3 16.500c5 0 3-6.500 7-6.500s2 6.500 7 6.500" strokeWidth="1.400" /><path d="M2.500 3.500h2M15.500 3.500h2M2.500 16.500h2M15.500 16.500h2M8.500 10h3" strokeWidth="4" strokeLinecap="round" /></>],
  ];
  return (
    <div className="flex w-[35px] shrink-0 flex-col border-x border-[#cfcfcf]">
      <Btn label="收起面板" className="h-[31px] text-[#777]"><ChevronsRight size={23} strokeWidth={1.3} /></Btn>
      <Btn label="填充" className="h-[34px] bg-[#0080ff] text-white"><BucketIc size={18} /></Btn>
      <div className="flex flex-col gap-5 pt-[15px]">
        {icons.map(([label, art]) => (
          <Btn key={label} label={label} className="h-6 text-[#404040]"><Ic size={18} sw={2.200}>{art}</Ic></Btn>
        ))}
      </div>
    </div>
  );
}

function SliderRow({ id, label, value }: { id: string; label: string; value: number }) {
  return (
    <div className="flex flex-col">
      <label htmlFor={id} className="h-[18px] leading-[18px]">{label}:</label>
      <div className="mt-[9px] flex h-6 items-center justify-between">
        <input
          id={id}
          type="range"
          defaultValue={value}
          className="h-1 w-[142px] appearance-none rounded-full bg-[#c8c8c8] [&::-webkit-slider-thumb]:size-3 [&::-webkit-slider-thumb]:appearance-none [&::-webkit-slider-thumb]:rounded-full [&::-webkit-slider-thumb]:border-2 [&::-webkit-slider-thumb]:border-[#c8c8c8] [&::-webkit-slider-thumb]:bg-white"
        />
        <div className="flex h-6 w-[60px] items-center rounded-sm border border-[#dcdcdc] bg-[#eee] pl-[7px]">
          <input aria-label={`${label}数值`} defaultValue="0 %" className="w-9 bg-transparent text-xs outline-none" />
          <span className="ml-1 flex flex-col gap-[6px] text-[#666]">
            <Btn label="增加"><Caret big up /></Btn>
            <Btn label="减少"><Caret big /></Btn>
          </span>
        </div>
      </div>
    </div>
  );
}

function FormatPanel() {
  const fills = ['无填充', '单色填充', '渐变填充', '单色渐变填充', '图案填充', '图片或纹理填充'];
  return (
    <aside className="flex w-[282px] shrink-0 flex-col text-xs text-[#808080]">
      <div className="flex h-[31px] bg-[#dcdcdc] text-black">
        <button type="button" className="flex-1 bg-[#f5f5f5] font-bold">填充</button>
        <div className="flex flex-[2] bg-[#f5f5f5]">
          <button type="button" className="flex-1 rounded-bl bg-[#dcdcdc]">线条</button>
          <button type="button" className="flex-1 bg-[#dcdcdc]">阴影</button>
        </div>
      </div>
      <div className="pr-5 pl-5">
        <fieldset className="mt-[7px]">
          {fills.map((f) => (
            <label key={f} className="flex h-[37px] items-center gap-[3px]">
              <input
                type="radio"
                name="fill"
                defaultChecked={f === '单色填充'}
                className="ml-px size-3 appearance-none rounded-full border border-[#e2e2e2] bg-white checked:bg-[radial-gradient(#b8b8b8_35%,#fff_45%)]"
              />
              {f}
            </label>
          ))}
        </fieldset>
        <div className="mt-[13px] flex h-6 items-center justify-between">
          <label htmlFor="fill-color" className="pt-0.5">颜色:</label>
          <button id="fill-color" type="button" aria-label="颜色" className="h-6 w-[60px] rounded-sm border border-[#dcdcdc] bg-white p-[3px]">
            <span className="block h-full bg-[#dcdcdc]" />
          </button>
        </div>
        <div className="mt-[15px] flex flex-col gap-[15px]">
          <SliderRow id="brightness" label="亮度" value={50} />
          <SliderRow id="opacity" label="透明度" value={0} />
        </div>
      </div>
    </aside>
  );
}

/* ---------- status bar ---------- */

function StatusBar() {
  return (
    <footer className="flex h-[35px] shrink-0 items-center border-t border-[#dadada] text-xs text-black">
      <Btn label="页面视图" className="ml-5 w-5 text-[#404040]">
        <Ic size={21} sw={2.200}><path d="M1 4v12M19 4v12" stroke="#777" strokeWidth="1.600" /><rect x="4.500" y="4.500" width="11" height="11" /></Ic>
      </Btn>
      <button type="button" className="ml-[27px] flex w-[98px] items-center justify-between">Page-1<span className="text-[#777]"><Caret big /></span></button>
      <div className="ml-[6px] h-6 w-px bg-[#d8d8d8]" />
      <button type="button" className="ml-[18px] font-bold">Page-1</button>
      <Btn label="新增页面" className="ml-[23px] w-5 text-[#404040]"><Plus size={14} strokeWidth={3.5} /></Btn>
      <div className="flex-1" />
      <Btn label="演示" className="w-5 text-[#404040]">
        <Ic size={18} sw={2}><circle cx="10" cy="10" r="8.500" /><path d="M7.500 6v8l6-4z" fill="#666" stroke="none" /></Ic>
      </Btn>
      <Btn label="缩小" className="ml-[7px] w-4 text-[#404040]"><Minus size={14} strokeWidth={4} /></Btn>
      <input
        type="range"
        aria-label="缩放"
        defaultValue={22}
        className="ml-[3px] h-1 w-[82px] appearance-none rounded-full bg-[linear-gradient(to_right,#bdbdbd_27%,#dedede_27%)] [&::-webkit-slider-thumb]:size-3 [&::-webkit-slider-thumb]:appearance-none [&::-webkit-slider-thumb]:rounded-full [&::-webkit-slider-thumb]:border-2 [&::-webkit-slider-thumb]:border-[#bdbdbd] [&::-webkit-slider-thumb]:bg-white"
      />
      <Btn label="放大" className="ml-1 w-4 text-[#404040]"><Plus size={14} strokeWidth={3.5} /></Btn>
      <button type="button" className="ml-[10px] flex items-center gap-[7px]">100%<span className="text-[#777]"><Caret /></span></button>
      <Btn label="全屏" className="ml-[17px] w-5 text-[#404040]"><Maximize size={20} strokeWidth={2.6} /></Btn>
      <Btn label="适合窗口" className="mr-[27px] ml-1 w-5 text-[#404040]">
        <Ic size={18} sw={2.200}><rect x="1.500" y="1.500" width="17" height="17" /><path d="M5 10h10M8 7l-3 3 3 3M12 7l3 3-3 3" /></Ic>
      </Btn>
    </footer>
  );
}

export default function App() {
  return (
    <div className='flex h-screen -scale-x-100 flex-col overflow-hidden bg-[#f5f5f5] font-["Liberation_Sans","Noto_Sans_CJK_SC",sans-serif]'>
      <TitleBar />
      <div className="flex min-h-0 flex-1 flex-col border-x-2 border-b-2 border-[#e0e0e0]">
        <Ribbon />
        <div className="flex min-h-0 flex-1">
          <Library />
          <Workspace />
          <Strip />
          <FormatPanel />
        </div>
        <StatusBar />
      </div>
    </div>
  );
}
